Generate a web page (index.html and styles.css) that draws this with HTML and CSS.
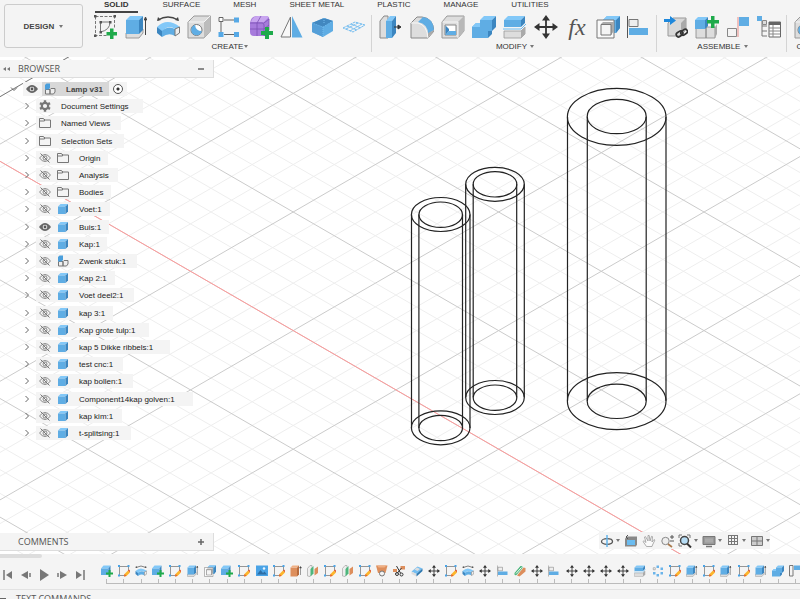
FILE: index.html
```html
<!DOCTYPE html>
<html lang="en">
<head>
  <meta charset="UTF-8" />
  <title>Lamp v31</title>
  <link rel="stylesheet" href="styles.css">
</head>
<body>
  <!-- icon set -->
  <svg class="sprite" xmlns="http://www.w3.org/2000/svg">
    <symbol id="sketch" viewBox="0 0 24 24">
      <path d="M1.500 1.500h19v11M1.500 1.500v19h11" fill="none" stroke="#777" stroke-dasharray="3 1.500"/>
      <path d="M6.500 7h9.500M6.500 7v10M16 7q0 8-9.500 10" fill="none" stroke="#777"/>
      <path d="M0 0h2.500v2.500H0zM19.500 0H22v2.500h-2.500zM0 19.500h2.500V22H0zM5.500 6H8v2.500H5.500zM15 6h2.500v2.500H15zM5.500 16H8v2.500H5.500z" fill="#555"/>
      <path d="M16 13.500h3.500V17H23v3.500h-3.500V24H16v-3.500h-3.500V17H16z" fill="#1faa4b"/>
    </symbol>
    <symbol id="sketchpen" viewBox="0 0 24 24">
      <path d="M3 3h18v9M3 3v18h9" fill="none" stroke="#777" stroke-width="1.500"/>
      <path d="M0 0h4v4H0zM19 0h4v4h-4zM0 19h4v4H0z" fill="#4aa3e6"/>
      <path d="M12 23l1-5 7-7 4 4-7 7z" fill="#fdb52b"/>
      <path d="M12 23l1-5 4 4zM20 11l2-2 3 3-1 3z" fill="#e0582f"/>
    </symbol>
    <symbol id="extrude" viewBox="0 0 24 24">
      <path d="M1 18h13l4-4v4l-4 5H1z" fill="#ddd" stroke="#888" stroke-width=".8"/>
      <path d="M1 5h13v14H1z" fill="#5fade4"/>
      <path d="M1 5l4-4h13l-4 4z" fill="#82c8f8"/>
      <path d="M14 5l4-4v14l-4 4z" fill="#3c86c0"/>
      <path d="M20.500 20V3M19.300 5l1.200-3 1.200 3z" fill="#444" stroke="#444"/>
    </symbol>
    <symbol id="extrudeorange" viewBox="0 0 24 24">
      <path d="M1 5h13v18H1z" fill="#dd8e5c"/>
      <path d="M1 5l4-4h13l-4 4z" fill="#f0b084"/>
      <path d="M14 5l4-4v18l-4 4z" fill="#b76b3d"/>
      <path d="M21 20V4M19 6l2-3 2 3z" fill="#444" stroke="#444"/>
    </symbol>
    <symbol id="revolve" viewBox="0 0 24 24">
      <path d="M2 5Q12-1 22 5" fill="none" stroke="#444" stroke-width="1.300"/>
      <path d="M1 6l1-4 3 3zM23 6l-1-4-3 3z" fill="#444"/>
      <path d="M1 12q10-10 23 0l-5 2q-7-5-13 3z" fill="#82c8f8"/>
      <path d="M1 12l5 4v6l-5-4z" fill="#3c86c0"/>
      <path d="M6 16q6-6 13-2v7q-6-4-13 1z" fill="#5fade4"/>
      <path d="M19 14l4.500-2v6L19 21z" fill="#eee" stroke="#777"/>
    </symbol>
    <symbol id="hole" viewBox="0 0 24 24">
      <path d="M1 7l6-6h16.500v15L17 23H1z" fill="#ddd" stroke="#999"/>
      <path d="M17 7v16l6.500-7V1z" fill="#bcbcbc"/>
      <path d="M1.500 7H17l6-6" fill="none" stroke="#f4f4f4"/>
      <circle cx="9.500" cy="15" r="5.500" fill="#fff" stroke="#777"/>
      <path d="M8 10a5.300 5.300 0 1 0 6.800 6q-6 0-6.800-6z" fill="#5fade4"/>
    </symbol>
    <symbol id="pattern" viewBox="0 0 24 24">
      <path d="M6 5h10M3 7v10M6 19.500h10" stroke="#666" fill="none"/>
      <path d="M1 2.500h4v4H1z" fill="#fff" stroke="#666"/>
      <path d="M16 2.500h5v5h-5zM.5 17h5v5h-5zM16 17h5v5h-5z" fill="#56a9e6"/>
    </symbol>
    <symbol id="form" viewBox="0 0 24 24">
      <path d="M1 8q1-7 7-7h9q4 0 3 5v8q0 7-6 7H5q-4 0-4-4z" fill="#a77bdc"/>
      <path d="M2 7q2-6 7-6h8q3 0 2 2l-4 4H3z" fill="#c8a5ef"/>
      <path d="M1 8h12q2 0 2 2v11l5-6V4l-5 4M8 8v13M1 14h14l5-4M8 8l4-7" fill="none" stroke="#7b50b4" stroke-width=".8"/>
      <path d="M16 12h4v4h4v4h-4v4h-4v-4h-4v-4h4z" fill="#1faa4b"/>
    </symbol>
    <symbol id="mirror" viewBox="0 0 24 24">
      <path d="M1 22L10.500 2v20z" fill="#f8f8f8" stroke="#777"/>
      <path d="M12 1l10.500 21.500H12z" fill="#5fade4"/>
    </symbol>
    <symbol id="thicken" viewBox="0 0 24 24">
      <path d="M1 8l12-5 9 3v10l-10 6-11-5z" fill="#5fade4"/>
      <path d="M1 8l11 4v10L1 17z" fill="#559fd8"/>
      <path d="M1 8l12-5 9 3-10 6z" fill="#4288c0"/>
      <path d="M1 8l11 4 10-6M12 12v10M13 3v5" stroke="#74bdf0" stroke-dasharray="1 1" fill="none"/>
    </symbol>
    <symbol id="mesh" viewBox="0 0 24 24">
      <path d="M1 13l12-6 10 3-12 7zM5 11l10 4M9 9l10 4M4 14l12-6M8 16l12-7" fill="none" stroke="#74bdf0" stroke-dasharray="3 .6"/>
    </symbol>
    <symbol id="presspull" viewBox="0 0 24 24">
      <path d="M1 23V6l4-5h4v22z" fill="#ddd" stroke="#888"/>
      <path d="M7 6l4-5h6l-4 5z" fill="#82c8f8"/><path d="M7 6h6v17H7z" fill="#5fade4"/>
      <path d="M13 6l4-5v17l-4 5z" fill="#3c86c0"/>
      <path d="M15 12h5M19 10l3 2-3 2z" stroke="#333" fill="#333"/>
    </symbol>
    <symbol id="fillet" viewBox="0 0 24 24">
      <path d="M1 8l6-6h5q11 1 12 14l-6 7H1z" fill="#ddd" stroke="#888"/>
      <path d="M8 7l5-5q10 1 11 13l-6 4q0-10-10-12z" fill="#5fade4"/>
      <path d="M1 8h7q9 2 10 15" fill="none" stroke="#f8f8f8"/>
      <path d="M18 22v-4l6-3v1z" fill="#aaa"/>
    </symbol>
    <symbol id="shell" viewBox="0 0 24 24">
      <path d="M1 7l5-6h17v15l-6 7H1z" fill="#ddd" stroke="#999"/>
      <path d="M17 7l6-6v15l-6 7z" fill="#b8b8b8"/>
      <path d="M1.500 7H17v16" fill="none" stroke="#f5f5f5"/>
      <path d="M4 10h11v10H4z" fill="#fff" stroke="#888"/>
      <path d="M4.500 10.500L8 14v2l-3.500 4z" fill="#3c86c0"/><path d="M4.500 20L8 16h7v4z" fill="#5fade4"/>
    </symbol>
    <symbol id="combine" viewBox="0 0 24 24">
      <path d="M8 5l4-4h12l-4 4z" fill="#82c8f8"/>
      <path d="M0 12l4-4h4V5h12v11h-4v7H0z" fill="#5fade4"/>
      <path d="M20 5l4-4v11l-4 4v3l-4 4v-7h4z" fill="#3c86c0"/>
      <path d="M0 12l4-4h4v4z" fill="#82c8f8"/>
    </symbol>
    <symbol id="split" viewBox="0 0 24 24">
      <path d="M1 5l4-4h17l-4 4z" fill="#82c8f8"/><path d="M1 5h17v7H1z" fill="#5fade4"/>
      <path d="M18 5l4-4v7l-4 4z" fill="#3c86c0"/>
      <path d="M0 14h18l5-5" stroke="#6bb9ee" fill="none"/>
      <path d="M1 16h17l4-4v7l-4 4H1z" fill="#ddd" stroke="#999" stroke-width=".8"/>
      <path d="M18 16v7l4-4v-7z" fill="#aaa"/>
    </symbol>
    <symbol id="move" viewBox="0 0 24 24">
      <path d="M12 3v18M3 12h18" stroke="#333" stroke-width="1.800"/>
      <path d="M8 5.500L12 0l4 5.500zM8 18.500l4 5.500 4-5.500zM5.500 8L0 12l5.500 4zM18.500 8l5.500 4-5.500 4z" fill="#333"/>
    </symbol>
    <symbol id="offset" viewBox="0 0 24 24">
      <path d="M7 5l4-4h13v12l-4 5h-3V8H7z" fill="#5fade4"/><path d="M20 5l4-4v12l-4 5z" fill="#3c86c0"/>
      <path d="M7 5l4-4h13l-4 4z" fill="#82c8f8"/>
      <path d="M1 5h17v18H1z" fill="#fafafa" stroke="#777"/>
      <path d="M5 9l2-2h11v9l-3 4H5z" fill="#aaa"/><path d="M5 9.500h10V20H5z" fill="#f4f4f4" stroke="#777"/>
    </symbol>
    <symbol id="align" viewBox="0 0 24 24">
      <path d="M.5 1v22" stroke="#555"/>
      <path d="M2 4.500h9v7H2z" fill="#eee" stroke="#777"/>
      <path d="M2 13h19v7H2z" fill="#5fade4"/>
    </symbol>
    <symbol id="insert" viewBox="0 0 24 24">
      <path d="M4 8l5-5h13v11l-5 7H4z" fill="#d8d8d8" stroke="#999"/>
      <path d="M17 8l5-5v11l-5 7z" fill="#aaa"/>
      <path d="M0 4h6V1l6 4.500L6 10V7H0z" fill="#1e88dc"/>
      <g fill="none" stroke="#333" stroke-width="1.700"><rect x="12" y="17" width="7" height="4.500" rx="2.200" transform="rotate(-35 15 19)"/><rect x="16.500" y="15" width="7" height="4.500" rx="2.200" transform="rotate(-35 20 17)"/></g>
    </symbol>
    <symbol id="newcomp" viewBox="0 0 24 24">
      <path d="M1 12h10v11H1zM11 12h9v11h-9z" fill="#ddd" stroke="#888" stroke-width=".8"/>
      <path d="M20 12l2-3v10l-2 4z" fill="#aaa"/>
      <path d="M0 5l3-3h10l-3 3z" fill="#82c8f8"/><path d="M0 5h10v9H0z" fill="#5fade4"/><path d="M10 5l3-3v9l-3 3z" fill="#3c86c0"/>
      <path d="M16 1h3.500v4H24v3.500h-4.500V13H16V8.500h-4V5h4z" fill="#1faa4b"/>
    </symbol>
    <symbol id="joint" viewBox="0 0 24 24">
      <path d="M1.500 13.500h9v8h-9z" fill="#f4f4f4" stroke="#888"/>
      <path d="M12 2v20" stroke="#e88b87"/><path d="M13 2h10v9H13z" fill="#5fade4"/>
    </symbol>
    <symbol id="bom" viewBox="0 0 24 24">
      <path d="M5 6v15h5M5 11h5M5 16h5" fill="none" stroke="#777"/>
      <path d="M0 1h5v5H0z" fill="#5fade4"/><path d="M5.500 5.500h4v4h-4z" fill="#ddd" stroke="#888"/>
      <path d="M12 7h11.500v15H12z" fill="#fff" stroke="#666"/>
      <path d="M12 7h11.500v3H12z" fill="#666"/><path d="M12 13h11M12 16h11M12 19h11M16 10v12" stroke="#888"/>
    </symbol>
    <symbol id="plane" viewBox="0 0 24 24">
      <path d="M1 22V7l5-6h4v17l-4 5z" fill="#eee" stroke="#888"/>
      <path d="M7 23V8l6-6v15z" fill="#4db67c"/><path d="M15 21V8l7-5v13z" fill="#dd8e5c"/>
    </symbol>
    <symbol id="compadd" viewBox="0 0 24 24">
      <path d="M0 7l5-6h14l-4 6z" fill="#82c8f8"/><path d="M0 7h15v13H0z" fill="#5fade4"/><path d="M15 7l4-6v14l-4 5z" fill="#3c86c0"/>
      <path d="M15 10h4v5h5v4h-5v5h-4v-5h-5v-4h5z" fill="#1faa4b"/>
    </symbol>
    <symbol id="image" viewBox="0 0 24 24">
      <path d="M0 1h24v21H0z" fill="#4aa3e6"/><path d="M2 19l7-9 5 6 3-3 5 6z" fill="#2c6ea6"/><circle cx="16" cy="7" r="2.500" fill="#e8f5ff"/>
    </symbol>
    <symbol id="loft" viewBox="0 0 24 24">
      <path d="M0 1h23l-4 15H4z" fill="#dd8e5c"/><path d="M2 1h19l-4 4H5z" fill="#f0b084"/>
      <circle cx="12" cy="17" r="5" fill="#f4f4f4" stroke="#777" stroke-width="2"/>
    </symbol>
    <symbol id="trim" viewBox="0 0 24 24">
      <path d="M0 8h8v6H0zM15 2h9v7h-9z" fill="#dd8e5c"/>
      <path d="M7 2l8 14M17 6L8 17" stroke="#333" stroke-width="2"/>
      <g fill="none" stroke="#333" stroke-width="2"><circle cx="8" cy="18" r="3"/><circle cx="17" cy="19" r="3"/></g>
    </symbol>
    <symbol id="eraser" viewBox="0 0 24 24">
      <path d="M1 13L13 3l10 4-12 11z" fill="#74bdf0"/><path d="M1 13l10 5v5L1 18z" fill="#ddd"/><path d="M11 18L23 7v5L11 23z" fill="#2c76ae"/>
      <path d="M7 9l5-4 6 3-5 4z" fill="#ddd"/>
    </symbol>
    <symbol id="diag" viewBox="0 0 24 24">
      <path d="M1 16L13 2q5-1 4 4L5 20q-5 2-4-4z" fill="#4db67c"/><path d="M6 21L19 5l4 1v7L11 23z" fill="#dd8e5c"/><path d="M4 17L15 5" stroke="#fff" stroke-width="2"/>
    </symbol>
    <symbol id="circular" viewBox="0 0 24 24">
      <path d="M9 1h5v5H9zM17 5h5v5h-5zM17 14h5v5h-5zM9 18h5v5H9zM2 14h5v5H2z" fill="#6bb4ea"/><path d="M2.500 5.500h4v4h-4z" fill="#fff" stroke="#777"/>
    </symbol>
    <symbol id="corner" viewBox="0 0 24 24">
      <path d="M1 1h7v21H1z" fill="#f4f4f4" stroke="#777" stroke-width="2"/><path d="M10 1h14v9H10z" fill="#5fade4"/>
    </symbol>
    <symbol id="eye" viewBox="0 0 12 12">
      <path d="M0 6q6-8 12 0-6 8-12 0z" fill="#666"/><circle cx="6" cy="6" r="2.300" fill="#eee"/><circle cx="6" cy="6" r="1.400" fill="#555"/>
    </symbol>
    <symbol id="eyeoff" viewBox="0 0 12 12">
      <path d="M.5 6q5.500-7 11 0-5.500 7-11 0z" fill="none" stroke="#888"/><circle cx="6" cy="6" r="2" fill="none" stroke="#888"/><path d="M1.500 1.500l9 9" stroke="#777"/>
    </symbol>
    <symbol id="gear" viewBox="0 0 12 12">
      <circle cx="6" cy="6" r="3.200" fill="none" stroke="#777" stroke-width="2.200"/>
      <path d="M6 .3v2.200M6 9.500v2.200M1 3.100l2 1.200M9 7.700l2 1.200M1 8.900l2-1.200M9 4.300l2-1.200" stroke="#777" stroke-width="2.400"/>
    </symbol>
    <symbol id="folder" viewBox="0 0 12 12">
      <path d="M.5 10.500v-9h4l1 1.500h6v7.500zM.5 4h5V2" fill="none" stroke="#777"/>
    </symbol>
    <symbol id="cube" viewBox="0 0 12 12">
      <path d="M1 3.500L3.500 1H11L8.500 3.500z" fill="#82c8f8"/><path d="M1 3.500h7.500V11H1z" fill="#5fade4"/><path d="M8.500 3.500L11 1v7.500L8.500 11z" fill="#3c86c0"/>
    </symbol>
    <symbol id="assembly" viewBox="0 0 12 12">
      <path d="M1.500 6.500H6V11H1.500zM6 6.500l1-1h4V9l-1.500 2H6z" fill="#eee" stroke="#777"/>
      <path d="M1 2l1.500-1.500H6V5L4.500 6.500H1z" fill="#4b9fdc"/>
    </symbol>
    <symbol id="chevron" viewBox="0 0 12 12"><path d="M4.500 3L7.500 6l-3 3" fill="none" stroke="#666"/></symbol>
    <symbol id="orbit" viewBox="0 0 14 14">
      <ellipse cx="7" cy="7.500" rx="5.500" ry="2.800" fill="none" stroke="#555" stroke-width="1.300"/><path d="M7 1v12" stroke="#62b3ea" stroke-width="1.500"/>
    </symbol>
    <symbol id="lookat" viewBox="0 0 14 14">
      <path d="M1 4.500l2-2h10v8l-1 2H1z" fill="#888"/><path d="M3 6h8v5H3z" fill="#6bbcf0"/><path d="M4 1L2 3l2 2" fill="none" stroke="#555"/>
    </symbol>
    <symbol id="hand" viewBox="0 0 14 14">
      <path d="M4.500 12.500L1 7.500l1-.8 2 1.800L2.500 3l1-.4L6 7V1.500h1.200L8 7l1.500-4.700 1 .3L10 8l2-2.500.9.600L10.500 11l-.5 1.500z" fill="#fafafa" stroke="#999" stroke-width=".8"/>
    </symbol>
    <symbol id="zoom" viewBox="0 0 14 14">
      <circle cx="5.500" cy="7" r="3.700" fill="#eee" stroke="#888"/><path d="M8 10l4 3" stroke="#a9794c" stroke-width="1.700"/><path d="M10 3h4M12 1v4M10 7h4" stroke="#555"/>
    </symbol>
    <symbol id="fit" viewBox="0 0 14 14">
      <path d="M1 4V1h3M9 1h3v3M1 9v3h3" fill="none" stroke="#777"/><circle cx="6.500" cy="6.500" r="4" fill="#b6dcf4" stroke="#444" stroke-width="1.500"/><path d="M9 9.500l4 4" stroke="#333" stroke-width="2"/>
    </symbol>
    <symbol id="display" viewBox="0 0 14 14">
      <path d="M1 2.500h12v8H1z" fill="#999" stroke="#777"/><path d="M3 4.500h8v4H3z" fill="#aaa"/><path d="M4 12.500h6" stroke="#777" stroke-width="1.500"/>
    </symbol>
    <symbol id="grid" viewBox="0 0 14 14"><path d="M2.500 1v10M5.500 1v10M8.500 1v10M11.500 1v10M2 1.500h10M2 4.500h10M2 7.500h10M2 10.500h10" stroke="#777"/></symbol>
    <symbol id="views" viewBox="0 0 14 14"><path d="M1.500 2.500h11v9h-11zM7 2v10M1 7h12" fill="#ccc" stroke="#777"/></symbol>
  </svg>

  <header class="toolbar">
    <button class="workspace">DESIGN <span class="caret"></span></button>
    <div class="ribbon">
      <nav class="tabs">
        <button class="tab active">SOLID</button>
        <button class="tab">SURFACE</button>
        <button class="tab">MESH</button>
        <button class="tab">SHEET METAL</button>
        <button class="tab">PLASTIC</button>
        <button class="tab">MANAGE</button>
        <button class="tab">UTILITIES</button>
      </nav>
      <div class="groups">
        <section class="group">
          <div class="tools" data-icons="sketch extrude revolve hole pattern form mirror thicken mesh"></div>
          <button class="group-name">CREATE<span class="caret"></span></button>
        </section>
        <section class="group">
          <div class="tools" data-icons="presspull fillet shell combine split move fx offset align"></div>
          <button class="group-name">MODIFY <span class="caret"></span></button>
        </section>
        <section class="group">
          <div class="tools" data-icons="insert newcomp joint bom"></div>
          <button class="group-name">ASSEMBLE <span class="caret"></span></button>
        </section>
        <section class="group">
          <div class="tools" data-icons="hole split"></div>
          <button class="group-name">CONSTRUCT</button>
        </section>
      </div>
    </div>
  </header>

  <main class="viewport">
    <svg class="scene" xmlns="http://www.w3.org/2000/svg">
      <g transform="translate(0 -57)">
        <path id="minorGrid" class="minor"/>
        <path id="majorGrid" class="major"/>
        <path class="dark-line" d="M0 96.700L72 55"/>
        <path class="axis" d="M0 161.300L1200 854"/>
        <g class="tube">
          <ellipse cx="440.700" cy="214.500" rx="29.300" ry="17"/><ellipse cx="440.700" cy="214.700" rx="21.800" ry="12.700"/>
          <ellipse cx="440.700" cy="427.800" rx="29.300" ry="17"/><ellipse cx="440.700" cy="428" rx="21.800" ry="12.700"/>
          <path d="M411.500 214.500v213.500M418.900 214.500v213.500M462.500 214.500v213.500M470 214.500v213.500"/>
        </g>
        <g class="tube">
          <ellipse cx="495" cy="184.300" rx="29.300" ry="17"/><ellipse cx="495" cy="184.300" rx="21.800" ry="12.700"/>
          <ellipse cx="495" cy="397.500" rx="29.300" ry="17"/><ellipse cx="495" cy="397.700" rx="21.800" ry="12.700"/>
          <path d="M465.700 184.300v213M473.200 184.300v213M516.700 184.300v213M524.300 184.300v213"/>
        </g>
        <g class="tube">
          <ellipse cx="616.700" cy="116.800" rx="49.300" ry="28.500"/><ellipse cx="616.700" cy="116.500" rx="29.500" ry="17.200"/>
          <ellipse cx="616.700" cy="401.200" rx="49.300" ry="28.500"/><ellipse cx="616.700" cy="401.300" rx="29.500" ry="17.200"/>
          <path d="M567.500 116.800v284M587.300 116.800v284M646.200 116.800v284M666 116.800v284"/>
        </g>
      </g>
    </svg>

    <aside class="side">
      <div class="panel-bar">
        <svg class="collapse" viewBox="0 0 8 8"><path d="M4 2L1 4l3 2zM8 2L5 4l3 2z" fill="#777"/></svg>
        <span>BROWSER</span>
        <button class="sign" aria-label="Collapse browser"><svg viewBox="0 0 8 8"><path d="M1 4h6" stroke="#666" stroke-width="1.500"/></svg></button>
      </div>
      <ul class="tree" id="tree">
        <li class="row root">
          <svg class="icon down"><use href="#chevron"/></svg>
          <div class="cell">
            <svg class="icon"><use href="#eye"/></svg>
            <span class="current"><svg class="icon"><use href="#assembly"/></svg>Lamp v31</span>
            <input type="radio" checked aria-label="Activate Lamp v31">
          </div>
        </li>
      </ul>
      <div class="panel-bar comments">
        <span>COMMENTS</span>
        <button class="sign" aria-label="Add comment"><svg viewBox="0 0 8 8"><path d="M1 4h6M4 1v6" stroke="#666" stroke-width="1.500"/></svg></button>
      </div>
    </aside>

    <nav class="navbar">
      <button aria-label="Orbit"><svg><use href="#orbit"/></svg><span class="caret"></span></button>
      <button aria-label="Look at"><svg><use href="#lookat"/></svg></button>
      <button aria-label="Pan"><svg><use href="#hand"/></svg></button>
      <button aria-label="Zoom"><svg><use href="#zoom"/></svg></button>
      <button aria-label="Fit"><svg><use href="#fit"/></svg><span class="caret"></span></button>
      <button aria-label="Display settings"><svg><use href="#display"/></svg><span class="caret"></span></button>
      <button aria-label="Grid and snaps"><svg><use href="#grid"/></svg><span class="caret"></span></button>
      <button aria-label="Viewports"><svg><use href="#views"/></svg><span class="caret"></span></button>
    </nav>
  </main>

  <footer class="timeline">
    <div class="scroll-thumb"></div>
    <div class="playback">
      <button aria-label="Go to start"><svg viewBox="0 0 12 12"><path d="M2 1v10" stroke="#777" stroke-width="1.500"/><path d="M10 2v8L4 6z" fill="#777"/></svg></button>
      <button aria-label="Step back"><svg viewBox="0 0 12 12"><path d="M8 2v8L1 6z" fill="#777"/><path d="M10 4v4" stroke="#777" stroke-width="1.500"/></svg></button>
      <button aria-label="Play"><svg viewBox="0 0 12 12"><path d="M2 0v12l9-6z" fill="#777"/></svg></button>
      <button aria-label="Step forward"><svg viewBox="0 0 12 12"><path d="M4 2v8l7-4z" fill="#777"/><path d="M2 4v4" stroke="#777" stroke-width="1.500"/></svg></button>
      <button aria-label="Go to end"><svg viewBox="0 0 12 12"><path d="M2 2v8l6-4z" fill="#777"/><path d="M10 1v10" stroke="#777" stroke-width="1.500"/></svg></button>
    </div>
    <ol class="features" id="features"></ol>
  </footer>
  <div class="text-commands"><span class="dash"></span>TEXT COMMANDS</div>

  <script src="script.js"></script>
</body>
</html>
```
FILE: styles.css
```css
* {
  box-sizing: border-box;
}

body {
  margin: 0;
  height: 100vh;
  display: flex;
  flex-direction: column;
  overflow: hidden;
  font-family: "Liberation Sans", Arial, sans-serif;
  font-size: 8px;
  color: #333;
  background: #f4f4f4;
}

button {
  border: none;
  background: none;
  padding: 0;
  font: inherit;
  color: inherit;
  cursor: pointer;
}

svg {
  display: block;
}

ul, ol {
  list-style: none;
  margin: 0;
  padding: 0;
}

.sprite {
  position: absolute;
  width: 0;
  height: 0;
}

.caret {
  display: inline-block;
  border: 2px solid transparent;
  border-top: 3px solid #777;
  border-bottom: none;
  vertical-align: middle;
}

/* toolbar */
.toolbar {
  flex: none;
  display: flex;
  height: 57px;
  overflow: hidden;
}

.workspace {
  flex: none;
  width: 79px;
  height: 44px;
  margin: 4px 0 0 4px;
  border: 1px solid #ccc;
  border-radius: 3px;
  font-weight: bold;
  color: #444;
}

.workspace .caret {
  margin-left: 3px;
}

.tabs {
  display: flex;
  gap: 15px;
  height: 13px;
  padding-left: 12px;
}

.tab {
  flex: none;
  height: 13px;
  padding: 0 9px 4px;
  line-height: 9px;
  border-bottom: 2px solid transparent;
}

.tab.active {
  padding: 0 10px 4px 9px;
  border-color: #444;
  font-weight: bold;
}

.groups {
  display: flex;
  padding-top: 2px;
}

.group {
  flex: none;
  padding: 0 5px 0 7px;
  text-align: center;
}

.group:first-child {
  padding-left: 11px;
}

.group + .group {
  border-left: 1px solid #d4d4d4;
}

.tools {
  display: flex;
  gap: 7px;
}

.tools button, .tools svg {
  width: 24px;
  height: 24px;
}

.tools .fx {
  font: italic 24px/24px "Liberation Serif", serif;
  color: #555;
}

.group-name {
  display: block;
  margin: 3px auto 0;
  line-height: 10px;
}

.group-name .caret {
  margin-left: 1px;
}

/* viewport */
.viewport {
  flex: 1;
  min-height: 0;
  position: relative;
  display: flex;
  background: #fff;
  overflow: hidden;
}

.scene {
  position: absolute;
  inset: 0;
  width: 100%;
  height: 100%;
}

.scene path, .scene ellipse {
  fill: none;
}

.minor {
  stroke: #eee;
}

.major {
  stroke: #cbcbcb;
}

.dark-line {
  stroke: #777;
}

.axis {
  stroke: #ff9a9a;
}

.tube {
  stroke: #222;
  stroke-width: 1.2;
}

.side {
  position: relative;
  display: flex;
  flex-direction: column;
  width: 214px;
  padding: 3px 0;
}

.panel-bar {
  flex: none;
  display: flex;
  align-items: center;
  height: 18px;
  padding: 0 8px 0 18px;
  border: 1px solid #ddd;
  border-width: 0 1px 1px 0;
  background: #f4f4f4;
  font: 9px/12px "Open Sans", "Noto Sans", sans-serif;
  color: #555;
  position: relative;
}

.collapse {
  position: absolute;
  left: 2px;
  width: 8px;
  height: 8px;
}

.sign {
  margin-left: auto;
}

.sign svg {
  width: 8px;
  height: 8px;
}

.comments {
  margin-top: auto;
}

.tree {
  margin-top: 4px;
  color: #222;
}

.row {
  display: flex;
  height: 14px;
  margin-bottom: 3px;
  padding-left: 21px;
}

.row:nth-child(5n + 3) {
  margin-bottom: 4px;
}

.row.root {
  padding-left: 8px;
}

.icon {
  flex: none;
  width: 12px;
  height: 12px;
  margin: 1px 0;
}

.down {
  transform: rotate(90deg);
}

.cell {
  display: flex;
  align-items: center;
  gap: 6px;
  margin-left: 3px;
  padding-left: 3px;
  background: #f4f4f4;
  white-space: nowrap;
}

.cell .label {
  margin-left: 4px;
}

.root .cell {
  padding: 0 4px 0 3px;
  gap: 4px;
}

.current {
  display: flex;
  align-items: center;
  gap: 10px;
  height: 14px;
  padding: 0 6px 0 2px;
  background: #d8d8d8;
  font-weight: bold;
  color: #444;
}

.root input {
  appearance: none;
  width: 10px;
  height: 10px;
  margin: 0;
  border: 1px solid #555;
  border-radius: 50%;
  background: radial-gradient(#333 1px, #fff 2px);
}

.navbar {
  position: absolute;
  right: 30px;
  bottom: 5px;
  display: flex;
  align-items: center;
  gap: 4px;
  height: 17px;
  padding-left: 1px;
  background: #f4f4f4;
}

.navbar button {
  display: flex;
  align-items: center;
  gap: 2px;
}

.navbar svg {
  width: 14px;
  height: 14px;
}

/* timeline */
.timeline {
  flex: none;
  display: flex;
  height: 36px;
  position: relative;
  overflow: hidden;
  border-bottom: 1px solid #e2e2e2;
}

.scroll-thumb {
  position: absolute;
  top: 0;
  left: 0;
  width: 42px;
  height: 4px;
  border-radius: 0 2px 2px 0;
  background: #ddd;
}

.playback {
  flex: none;
  display: flex;
  align-items: flex-start;
  gap: 6px;
  width: 98px;
  padding: 15px 0 0 2px;
}

.playback svg {
  width: 12px;
  height: 12px;
}

.features {
  flex: 1;
  display: flex;
  margin: 11px -4px 0 0;
}

.features li {
  flex: 1;
  height: 19px;
  border-bottom: 1px solid #bbb;
}

.features li:first-child {
  border-bottom: none;
  background: linear-gradient(#bbb, #bbb) right bottom / 50% 1px no-repeat;
}

.features svg {
  width: 12px;
  height: 12px;
  margin: 0 auto;
}

.features li::after {
  content: "";
  display: block;
  width: 1px;
  height: 5px;
  margin: 2px auto 0;
  background: #bbb;
}

.text-commands {
  flex: none;
  display: flex;
  gap: 10px;
  height: 9px;
  padding: 3px 0 0;
  overflow: hidden;
  font: 9px/12px "Open Sans", "Noto Sans", sans-serif;
  color: #555;
}

.dash {
  width: 6px;
  height: 1px;
  margin-top: 5px;
  background: #666;
}
```
FILE: script.js
```js
const components = [
  ['gear', 'Document Settings'],
  ['folder', 'Named Views'],
  ['folder', 'Selection Sets'],
  ['folder', 'Origin', 'eyeoff'],
  ['folder', 'Analysis', 'eyeoff'],
  ['folder', 'Bodies', 'eyeoff'],
  ['cube', 'Voet:1', 'eyeoff'],
  ['cube', 'Buis:1', 'eye'],
  ['cube', 'Kap:1', 'eyeoff'],
  ['assembly', 'Zwenk stuk:1', 'eyeoff'],
  ['cube', 'Kap 2:1', 'eyeoff'],
  ['cube', 'Voet deel2:1', 'eyeoff'],
  ['cube', 'kap 3:1', 'eyeoff'],
  ['cube', 'Kap grote tulp:1', 'eyeoff'],
  ['cube', 'kap 5 Dikke ribbels:1', 'eyeoff'],
  ['cube', 'test cnc:1', 'eyeoff'],
  ['cube', 'kap bollen:1', 'eyeoff'],
  ['cube', 'Component14kap golven:1', 'eyeoff'],
  ['cube', 'kap kim:1', 'eyeoff'],
  ['cube', 't-splitsing:1', 'eyeoff']
];

const features = `compadd sketchpen revolve compadd sketchpen extrude offset compadd
  sketchpen image sketchpen extrudeorange plane sketchpen plane sketchpen loft trim
  eraser move sketchpen revolve move align diag move align move move move move split
  circular sketchpen extrude sketchpen extrude sketchpen extrude combine corner`;

function icon(name) {
  return `<svg class="icon"><use href="#${name}"/></svg>`;
}

// toolbar
document.querySelectorAll('.tools').forEach(tools => {
  tools.innerHTML = tools.dataset.icons.split(' ').map(name =>
    name === 'fx'
      ? '<button class="fx" aria-label="Parameters">fx</button>'
      : `<button aria-label="${name}"><svg><use href="#${name}"/></svg></button>`
  ).join('');
});

// browser tree
const tree = document.getElementById('tree');
components.forEach(([type, name, eye]) => {
  const li = document.createElement('li');
  li.className = 'row';
  // longer names get a wider tail
  const tail = Math.round(4 + name.length * 0.6);
  li.innerHTML = `${icon('chevron')}
    <div class="cell" style="padding-right: ${tail}px">
      ${eye ? icon(eye) : ''}${icon(type)}<span class="label">${name}</span>
    </div>`;
  tree.appendChild(li);
});

// timeline
document.getElementById('features').innerHTML = features.split(/\s+/)
  .map(name => `<li><svg><use href="#${name}"/></svg></li>`).join('');

// ground grid, every fifth line is a major one
const slope = 59.3 / 102.7;
const step = 118.6 / 5;
let minor = '';
let major = '';
for (let i = -80; i < 100; i++) {
  const width = 2400;
  const up = 262.7 + i * step;
  const down = 161.3 + i * step;
  const lines = [`M0 ${up}L${width} ${up - width * slope}`, `M0 ${down}L${width} ${down + width * slope}`].join('');
  if (i % 5 === 0) {
    major += lines;
  } else {
    minor += lines;
  }
}
document.getElementById('minorGrid').setAttribute('d', minor);
document.getElementById('majorGrid').setAttribute('d', major);
```
